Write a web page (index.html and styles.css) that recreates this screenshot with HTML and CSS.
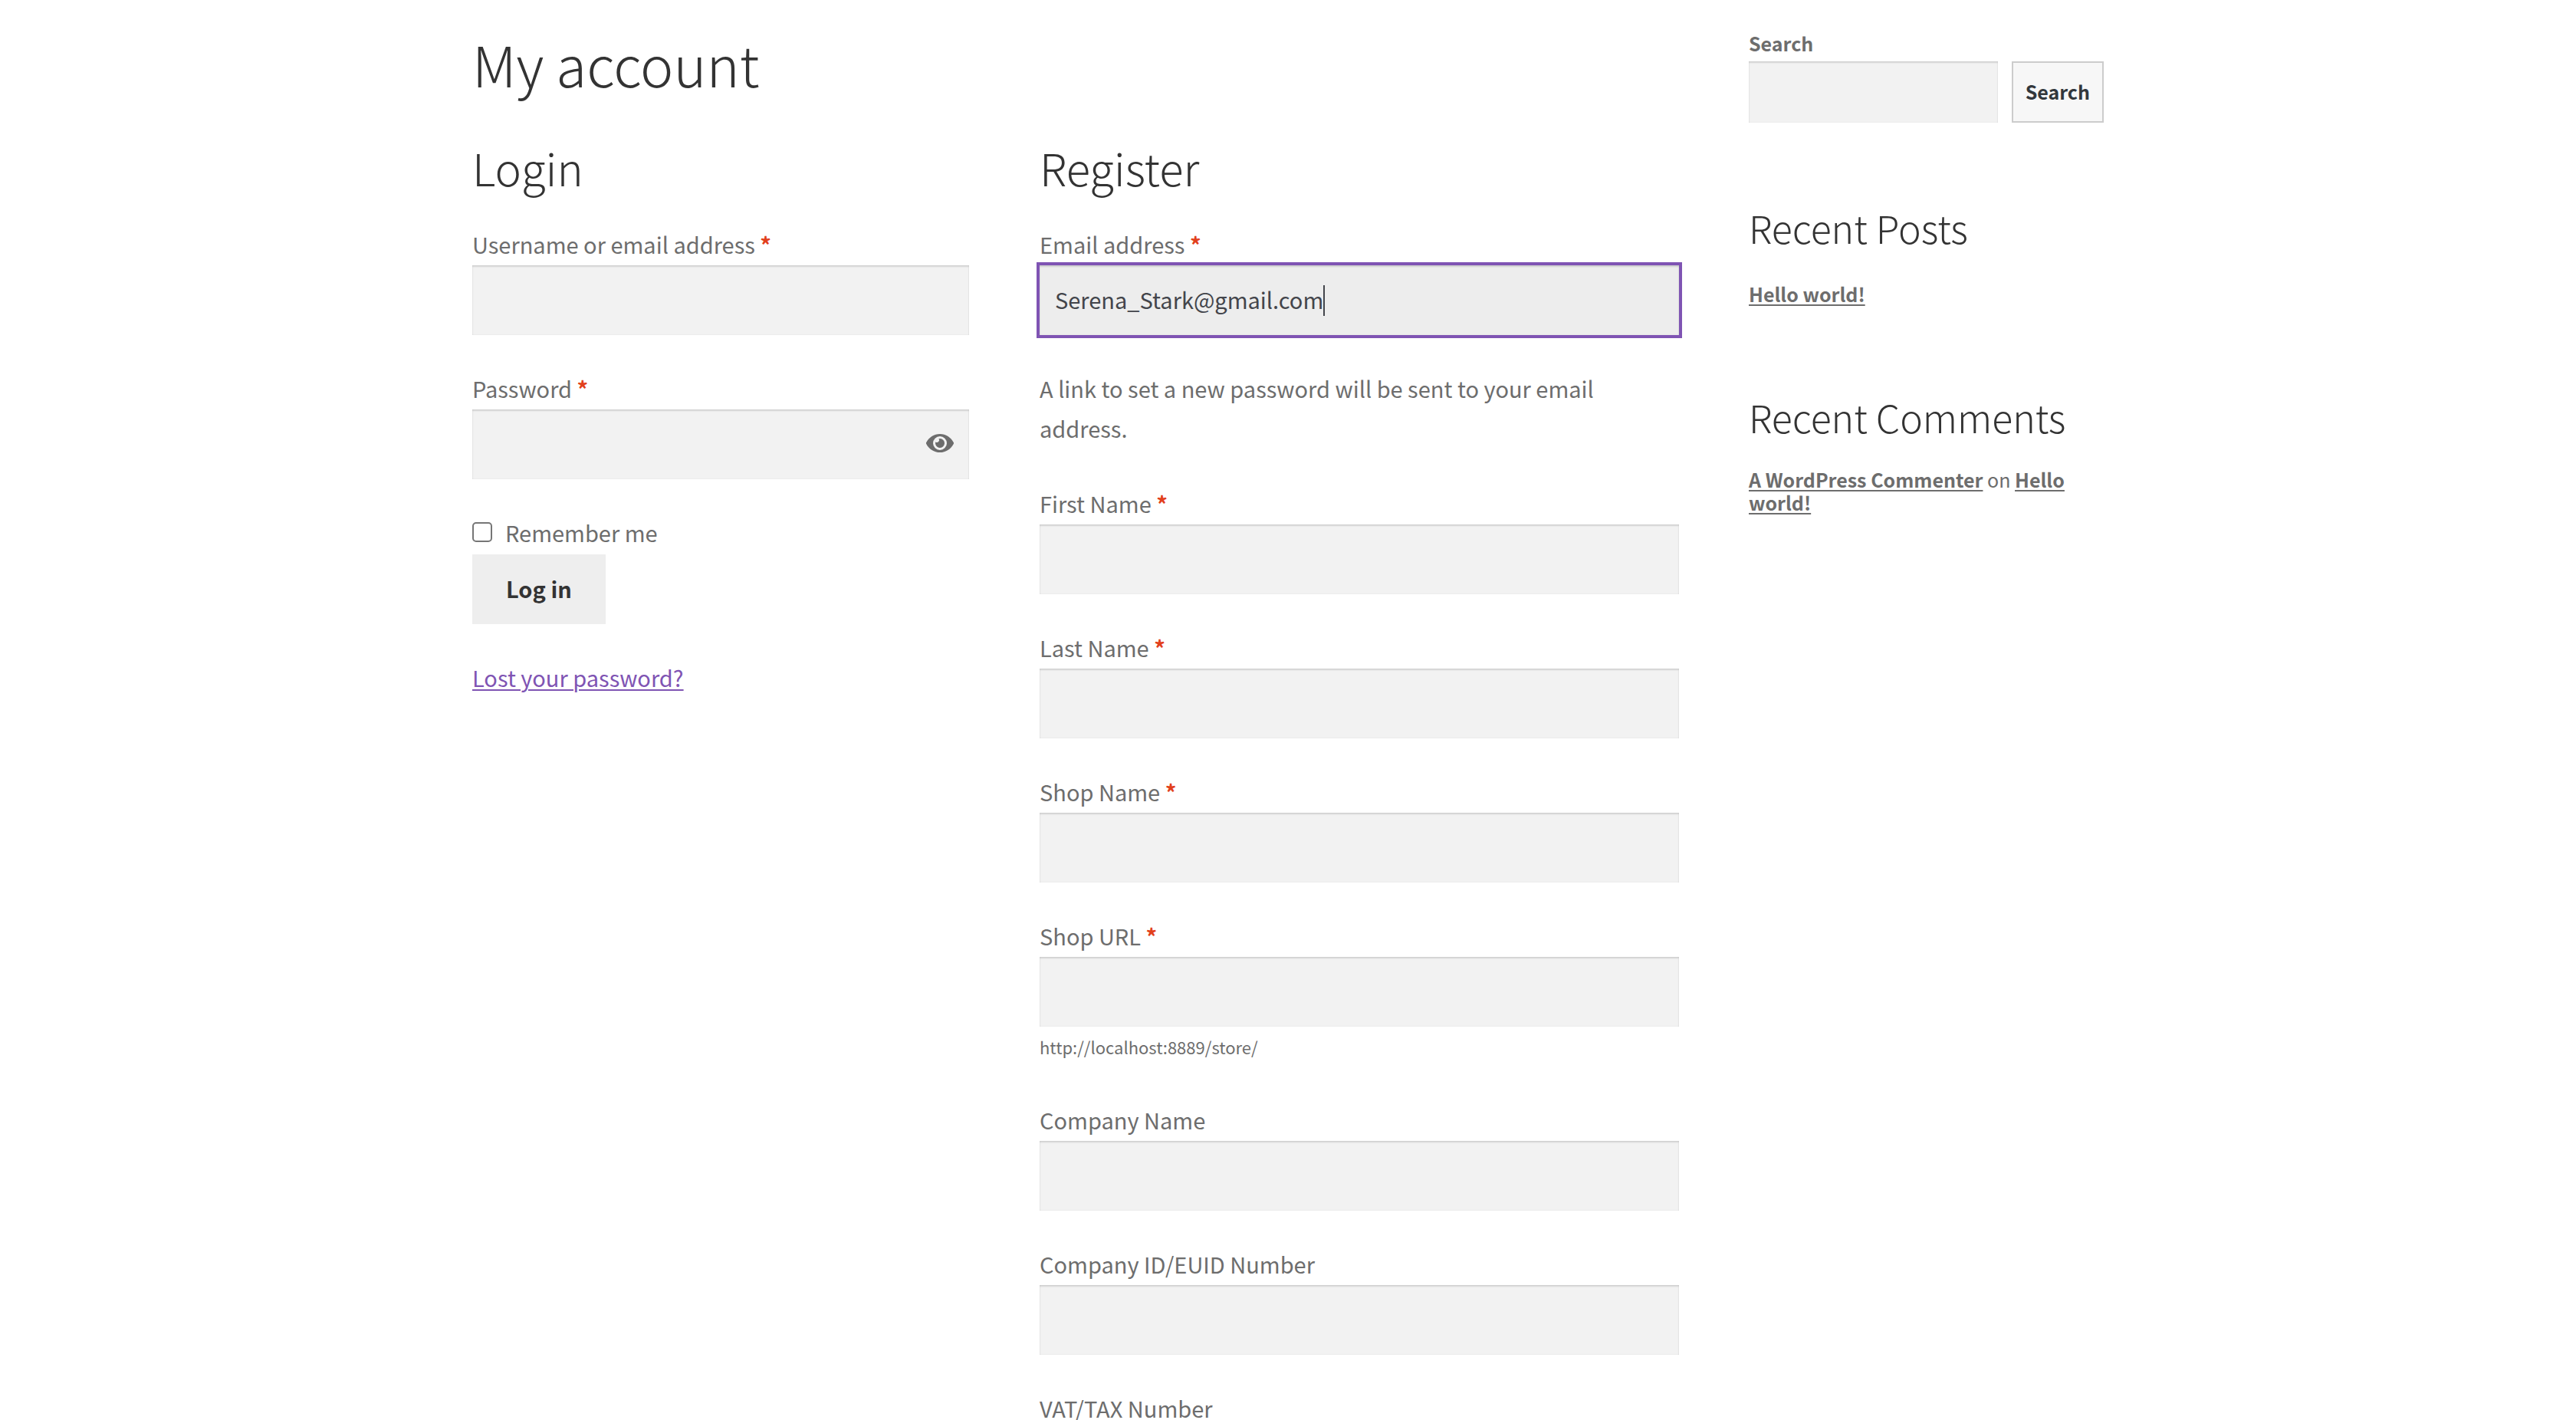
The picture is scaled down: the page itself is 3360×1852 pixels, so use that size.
FILE: index.html
```html
<!DOCTYPE html>
<html lang="en">
<head>
<meta charset="utf-8">
<title>My account</title>
<meta name="viewport" content="width=device-width, initial-scale=1">
<link rel="stylesheet" href="styles.css">
</head>
<body>
<div class="site">
  <main class="content">
    <h1 class="page-title">My account</h1>
    <div class="account">
      <section class="login">
        <h2 class="section-title">Login</h2>
        <form>
          <div class="field">
            <label class="label" for="username">Username or email address <span class="required">*</span></label>
            <input class="input" type="text" id="username">
          </div>
          <div class="field">
            <label class="label" for="password">Password <span class="required">*</span></label>
            <div class="input-wrap">
              <input class="input" type="password" id="password">
              <button class="show-password" type="button" aria-label="Show password">
                <svg class="eye" viewBox="0 64 576 384" aria-hidden="true"><path d="M572.52 241.4C518.29 135.59 410.93 64 288 64S57.68 135.64 3.48 241.41a32.35 32.35 0 0 0 0 29.19C57.71 376.41 165.07 448 288 448s230.32-71.64 284.52-177.41a32.35 32.35 0 0 0 0-29.19zM288 400a144 144 0 1 1 144-144 143.93 143.93 0 0 1-144 144zm0-240a95.31 95.31 0 0 0-25.31 3.79 47.85 47.85 0 0 1-66.9 66.9A95.78 95.78 0 1 0 288 160z"/></svg>
              </button>
            </div>
          </div>
          <div class="field">
            <label class="remember"><input class="checkbox" type="checkbox"><span>Remember me</span></label>
            <button class="button" type="submit">Log in</button>
          </div>
          <p class="lost"><a class="link" href="#">Lost your password?</a></p>
        </form>
      </section>
      <section class="register">
        <h2 class="section-title">Register</h2>
        <form>
          <div class="field">
            <label class="label" for="email">Email address <span class="required">*</span></label>
            <div class="input-wrap">
              <input class="input input-active" type="email" id="email" value="Serena_Stark@gmail.com">
              <span class="caret-track" aria-hidden="true"><span class="caret-text">Serena_Stark@gmail.com</span><span class="caret"></span></span>
            </div>
          </div>
          <p class="note">A link to set a new password will be sent to your email address.</p>
          <div class="field">
            <label class="label" for="first">First Name <span class="required">*</span></label>
            <input class="input" type="text" id="first">
          </div>
          <div class="field">
            <label class="label" for="last">Last Name <span class="required">*</span></label>
            <input class="input" type="text" id="last">
          </div>
          <div class="field">
            <label class="label" for="shop">Shop Name <span class="required">*</span></label>
            <input class="input" type="text" id="shop">
          </div>
          <div class="field">
            <label class="label" for="url">Shop URL <span class="required">*</span></label>
            <input class="input" type="text" id="url">
            <small class="hint">http://localhost:8889/store/</small>
          </div>
          <div class="field">
            <label class="label" for="company">Company Name</label>
            <input class="input" type="text" id="company">
          </div>
          <div class="field">
            <label class="label" for="company-id">Company ID/EUID Number</label>
            <input class="input" type="text" id="company-id">
          </div>
          <div class="field">
            <label class="label" for="vat">VAT/TAX Number</label>
            <input class="input" type="text" id="vat">
          </div>
        </form>
      </section>
    </div>
  </main>
  <aside class="sidebar">
    <form class="search">
      <label class="search-label" for="search">Search</label>
      <div class="search-row">
        <input class="input search-input" type="search" id="search">
        <button class="search-button" type="submit">Search</button>
      </div>
    </form>
    <section class="widget">
      <h2 class="widget-title">Recent Posts</h2>
      <ul class="widget-list">
        <li><a class="widget-link" href="#">Hello world!</a></li>
      </ul>
    </section>
    <section class="widget">
      <h2 class="widget-title">Recent Comments</h2>
      <p class="widget-text"><a class="widget-link" href="#">A WordPress Commenter</a> on <a class="widget-link" href="#">Hello world!</a></p>
    </section>
  </aside>
</div>
</body>
</html>
```
FILE: styles.css
```css
* { box-sizing: border-box; }
html { overflow-x: hidden; scrollbar-width: none; }
body {
  margin: 0;
  background: #fff;
  color: #6d6d6d;
  font-family: "Source Sans Pro", "Noto Sans CJK SC", sans-serif;
  font-size: 29px;
  line-height: 52px;
}
h1, h2, p { margin: 0; }
input, button { font: inherit; border: 0; border-radius: 0; margin: 0; }
.site {
  display: grid;
  grid-template-columns: 1574fr 463fr;
  column-gap: 91px;
  max-width: 2128px;
  margin: 0 auto;
}
.content { padding-top: 36px; }
.page-title {
  margin-bottom: 51px;
  color: #333;
  font-size: 73px;
  font-weight: 300;
  line-height: 92px;
}
.account {
  display: grid;
  grid-template-columns: 648fr 834fr;
  column-gap: 92px;
}
.section-title {
  margin-bottom: 35px;
  color: #333;
  font-size: 58px;
  font-weight: 300;
  line-height: 78px;
}
.field { margin-bottom: 43px; }
.label { display: block; margin-bottom: 2px; }
.required { color: #e2401c; font-weight: 700; }
.input {
  display: block;
  width: 100%;
  height: 91px;
  padding: 0 20px 4px;
  background: #f2f2f2;
  color: #43454b;
  box-shadow: inset 0 2px 2px rgba(0, 0, 0, 0.125), inset 0 0 2px rgba(0, 0, 0, 0.08);
  outline: 0;
}
.input-active { background: #ededed; outline: 4px solid #7f54b3; }
.input-wrap { position: relative; }
.caret-track {
  position: absolute;
  inset: 0 20px;
  display: flex;
  align-items: center;
  pointer-events: none;
}
.caret-text { visibility: hidden; }
.caret { width: 2px; height: 40px; background: #43454b; }
.show-password {
  position: absolute;
  top: 0;
  right: 0;
  height: 100%;
  padding: 0 20px;
  background: none;
}
.eye { display: block; width: 36px; height: 24px; margin-bottom: 4px; fill: #6d6d6d; }
.remember { display: flex; align-items: center; gap: 17px; margin-bottom: 3px; }
.checkbox {
  appearance: none;
  width: 26px;
  height: 26px;
  border: 2px solid #767676;
  border-radius: 5px;
  background: #fff;
}
.button {
  display: block;
  height: 91px;
  padding: 0 44px 4px;
  background: #eee;
  color: #333;
  font-weight: 700;
}
.link, .widget-link {
  text-decoration: underline;
  text-decoration-thickness: 2px;
  text-underline-offset: 3px;
}
.link { color: #7f54b3; }
.note { margin-bottom: 46px; }
.hint { display: block; font-size: 22px; }
.sidebar { padding-top: 36px; font-size: 25px; line-height: 30px; }
.search { margin-bottom: 97px; }
.search-label { display: block; padding: 5px 0 9px; font-weight: 700; }
.search-row { display: flex; gap: 18px; }
.search-input { flex: 1; min-width: 0; height: 80px; }
.search-button {
  height: 80px;
  padding: 0 16px 2px;
  border: 2px solid #ccc;
  background: #f7f7f7;
  color: #32373c;
  font-weight: 700;
}
.widget { margin-bottom: 101px; }
.widget-title {
  margin-bottom: 28px;
  color: #333;
  font-size: 50px;
  font-weight: 300;
  line-height: 78px;
}
.widget-list { margin: 0; padding: 0; list-style: none; line-height: 40px; }
.widget-link { color: #6d6d6d; font-weight: 700; }
```
